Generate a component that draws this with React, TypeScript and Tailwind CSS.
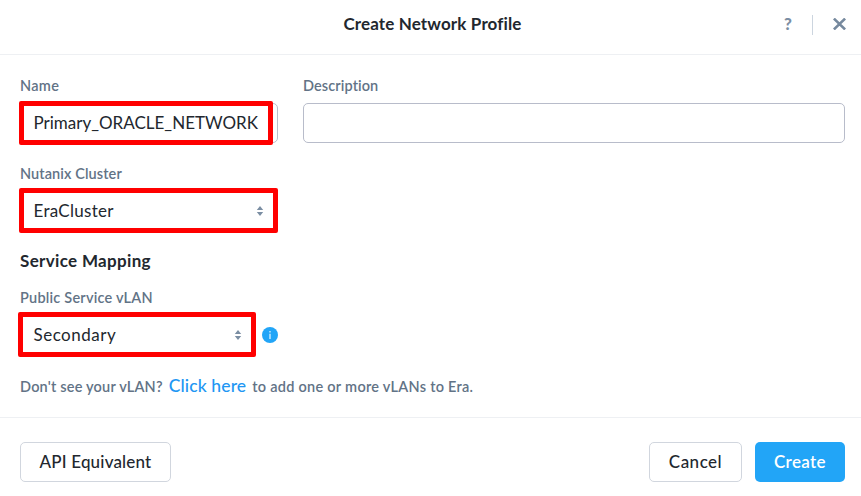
import type { ReactNode } from 'react';

function Label({ children, spacing }: { children: ReactNode; spacing: string }) {
  return (
    <div className={`h-[17px] whitespace-nowrap text-[14.5px] leading-[15px] font-semibold text-[#627386] ${spacing}`}>
      {children}
    </div>
  );
}

function Sorter() {
  return (
    <svg width="6" height="10" viewBox="0 0 6 10" fill="#7b8ea3" className="overflow-visible">
      <path d="M3 0 6.2 4H-.2Z M-.2 6h6.4L3 10Z" />
    </svg>
  );
}

export default function App() {
  return (
    <div className="flex h-[496px] w-[861px] flex-col overflow-hidden bg-white font-['Lato','Liberation_Sans',sans-serif] text-[#22272e]">
      <header className="flex h-[55px] shrink-0 border-b border-[#eef0f3] pl-[100px]">
        <h1 className="flex-1 pt-[13px] pl-[4px] text-center text-[17px] leading-[22px] font-bold tracking-[0.14px] whitespace-nowrap">
          Create Network Profile
        </h1>
        <div className="flex w-[100px] items-start">
          <span className="mt-[14px] ml-[22px] w-[10px] text-center text-[17px] leading-[20px] font-black text-[#7b8ea3]">?</span>
          <span className="mt-[15px] ml-[19px] h-[20px] w-px bg-[#ccd5df]" />
          <svg className="mt-[18px] ml-[20px]" width="13" height="12" viewBox="0 0 13 12" fill="none" stroke="#76899e" strokeWidth="2.6">
            <path d="M.9 .6 12.1 11.4M12.1 .6 .9 11.4" />
          </svg>
        </div>
      </header>

      <main className="flex h-[363px] shrink-0 flex-col border-b border-[#eef0f3] pr-[16px] pl-[20px]">
        <div className="flex gap-[25px] pt-[23px]">
          <div className="w-[258px]">
            <Label spacing="tracking-[0.3px]">Name</Label>
            <div className="relative mt-[8px] flex h-[40px] items-center rounded-[5px] border border-[#b8bfca] pl-[12.5px] text-[17px] whitespace-nowrap">
              <span>Primary_ORACLE_NETWORK</span>
              <div className="absolute -top-[3px] -left-[2px] h-[44px] w-[254px] rounded-[2px] border-[5px] border-[#ff0000]" />
            </div>
          </div>
          <div className="flex-1">
            <Label spacing="tracking-[0.1px]">Description</Label>
            <div className="mt-[8px] h-[40px] rounded-[5px] border border-[#b8bcca]" />
          </div>
        </div>

        <div className="pt-[23px]">
          <Label spacing="tracking-[0.1px]">Nutanix Cluster</Label>
          <div className="-ml-px mt-[5px] flex h-[45px] w-[259px] items-center justify-between rounded-[2px] border-[5px] border-[#ff0000] pr-[10px] pl-[9.5px] text-[17px]">
            <span className="tracking-[0.3px]">EraCluster</span>
            <Sorter />
          </div>
        </div>

        <h2 className="mt-[17px] h-[22px] text-[17px] leading-[22px] font-bold tracking-[0.33px]">Service Mapping</h2>

        <div className="pt-[18px]">
          <Label spacing="tracking-[0.22px]">Public Service vLAN</Label>
          <div className="-ml-[2px] mt-[5px] flex items-center gap-[6px]">
            <div className="flex h-[45px] w-[238px] items-center justify-between rounded-[2px] border-[5px] border-[#ff0000] pr-[10px] pl-[10.5px] text-[17px]">
              <span className="tracking-[0.5px]">Secondary</span>
              <Sorter />
            </div>
            <svg width="16" height="16" viewBox="0 0 16 16">
              <circle cx="8" cy="8" r="8" fill="#22a5f7" />
              <path d="M8 4v1.5M8 6.7V12" stroke="#d9f0ff" strokeWidth="1.3" />
            </svg>
          </div>
        </div>

        <p className="mt-[18px] flex items-baseline text-[14.5px] leading-[22px] font-semibold whitespace-nowrap text-[#627386]">
          <span className="tracking-[0.2px]">Don't see your vLAN?</span>
          <a className="ml-[6px] text-[17.5px] font-medium tracking-[0.12px] text-[#2196f3]">Click here</a>
          <span className="ml-[6px] tracking-[0.27px]">to add one or more vLANs to Era.</span>
        </p>
      </main>

      <footer className="flex h-[78px] shrink-0 items-start pt-[24px] pr-[16px] pl-[20px] text-[17px] font-medium">
        <button className="h-[40px] w-[151px] rounded-[5px] border border-[#d1d6de] tracking-[0.18px] whitespace-nowrap">API Equivalent</button>
        <button className="ml-auto h-[40px] w-[93px] rounded-[5px] border border-[#d1d6de] tracking-[0.5px]">Cancel</button>
        <button className="ml-[13px] h-[40px] w-[90px] rounded-[5px] bg-[#22a5f7] font-semibold tracking-[0.35px] text-white">Create</button>
      </footer>
    </div>
  );
}
